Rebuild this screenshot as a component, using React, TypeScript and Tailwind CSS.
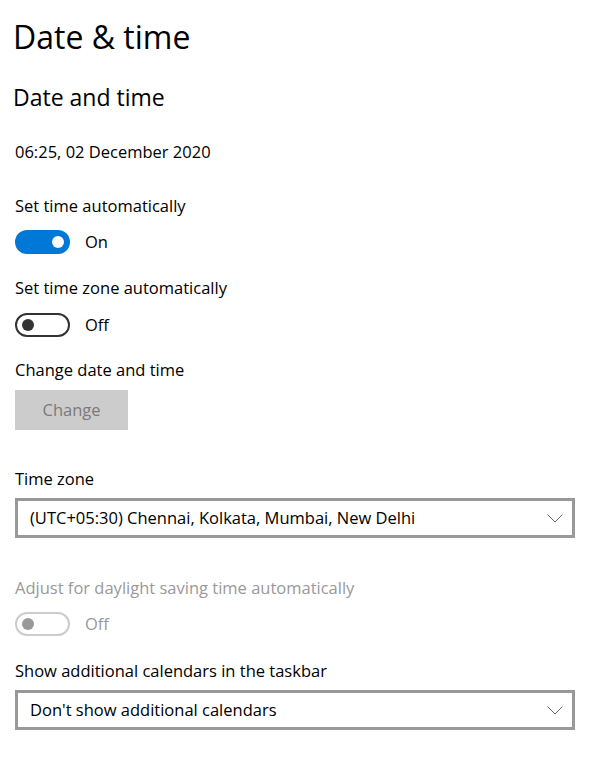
import React from "react";

const font = { fontFamily: '"Open Sans", "Noto Sans", sans-serif' };

const Chevron = () => (
  <svg width="16" height="9" viewBox="0 0 16 9" fill="none">
    <path d="M0.5 0.5 L8 8 L15.5 0.5" stroke="#666666" strokeWidth="1" />
  </svg>
);

const Toggle = ({ on, disabled, label }: { on?: boolean; disabled?: boolean; label: string }) => {
  if (on) {
    return (
      <div className="flex items-center h-[24px]">
        <div className="w-[55px] h-[24px] rounded-full bg-[#0078d7] flex items-center justify-end pr-[6px]">
          <div className="w-[12px] h-[12px] rounded-full bg-white" />
        </div>
        <span className="ml-[15px] text-[16.5px] text-black">{label}</span>
      </div>
    );
  }
  return (
    <div className="flex items-center h-[24px]">
      <div
        className={`w-[55px] h-[24px] rounded-full border-2 flex items-center pl-[5px] ${
          disabled ? "border-[#cccccc]" : "border-[#333333]"
        }`}
      >
        <div className={`w-[12px] h-[12px] rounded-full ${disabled ? "bg-[#999999]" : "bg-[#333333]"}`} />
      </div>
      <span className={`ml-[15px] text-[16.5px] ${disabled ? "text-[#999999]" : "text-black"}`}>{label}</span>
    </div>
  );
};

const Dropdown = ({ value }: { value: string }) => (
  <div className="mr-[37px] h-[40px] border-[3px] border-[#999999] bg-white flex items-center justify-between pl-[12px] pr-[9px]">
    <span className="text-[16.5px] text-black">{value}</span>
    <Chevron />
  </div>
);

export default function App() {
  return (
    <div className="w-[612px] h-[760px] bg-white pl-[15px] pt-[17px]" style={font}>
      <h1 className="text-[32px] leading-[40px] text-black -ml-[2px]">Date &amp; time</h1>
      <h2 className="mt-[25px] text-[23px] leading-[30px] text-black -ml-[2px]">Date and time</h2>
      <p className="mt-[29px] text-[16.5px] leading-[22px] text-black">06:25, 02 December 2020</p>

      <p className="mt-[32px] text-[16.5px] leading-[22px] text-black">Set time automatically</p>
      <div className="mt-[13px]">
        <Toggle on label="On" />
      </div>

      <p className="mt-[23px] text-[16.5px] leading-[22px] text-black">Set time zone automatically</p>
      <div className="mt-[14px]">
        <Toggle label="Off" />
      </div>

      <p className="mt-[22px] text-[16.5px] leading-[22px] text-black">Change date and time</p>
      <div className="mt-[9px] w-[113px] h-[40px] bg-[#cccccc] flex items-center justify-center text-[16.5px] text-[#7a7a7a]">
        Change
      </div>

      <p className="mt-[38px] text-[16.5px] leading-[22px] text-black">Time zone</p>
      <div className="mt-[8px]">
        <Dropdown value="(UTC+05:30) Chennai, Kolkata, Mumbai, New Delhi" />
      </div>

      <p className="mt-[39px] text-[16.5px] leading-[22px] text-[#999999]">
        Adjust for daylight saving time automatically
      </p>
      <div className="mt-[13px]">
        <Toggle disabled label="Off" />
      </div>

      <p className="mt-[24px] text-[16.5px] leading-[22px] text-black">Show additional calendars in the taskbar</p>
      <div className="mt-[8px]">
        <Dropdown value="Don't show additional calendars" />
      </div>
    </div>
  );
}
